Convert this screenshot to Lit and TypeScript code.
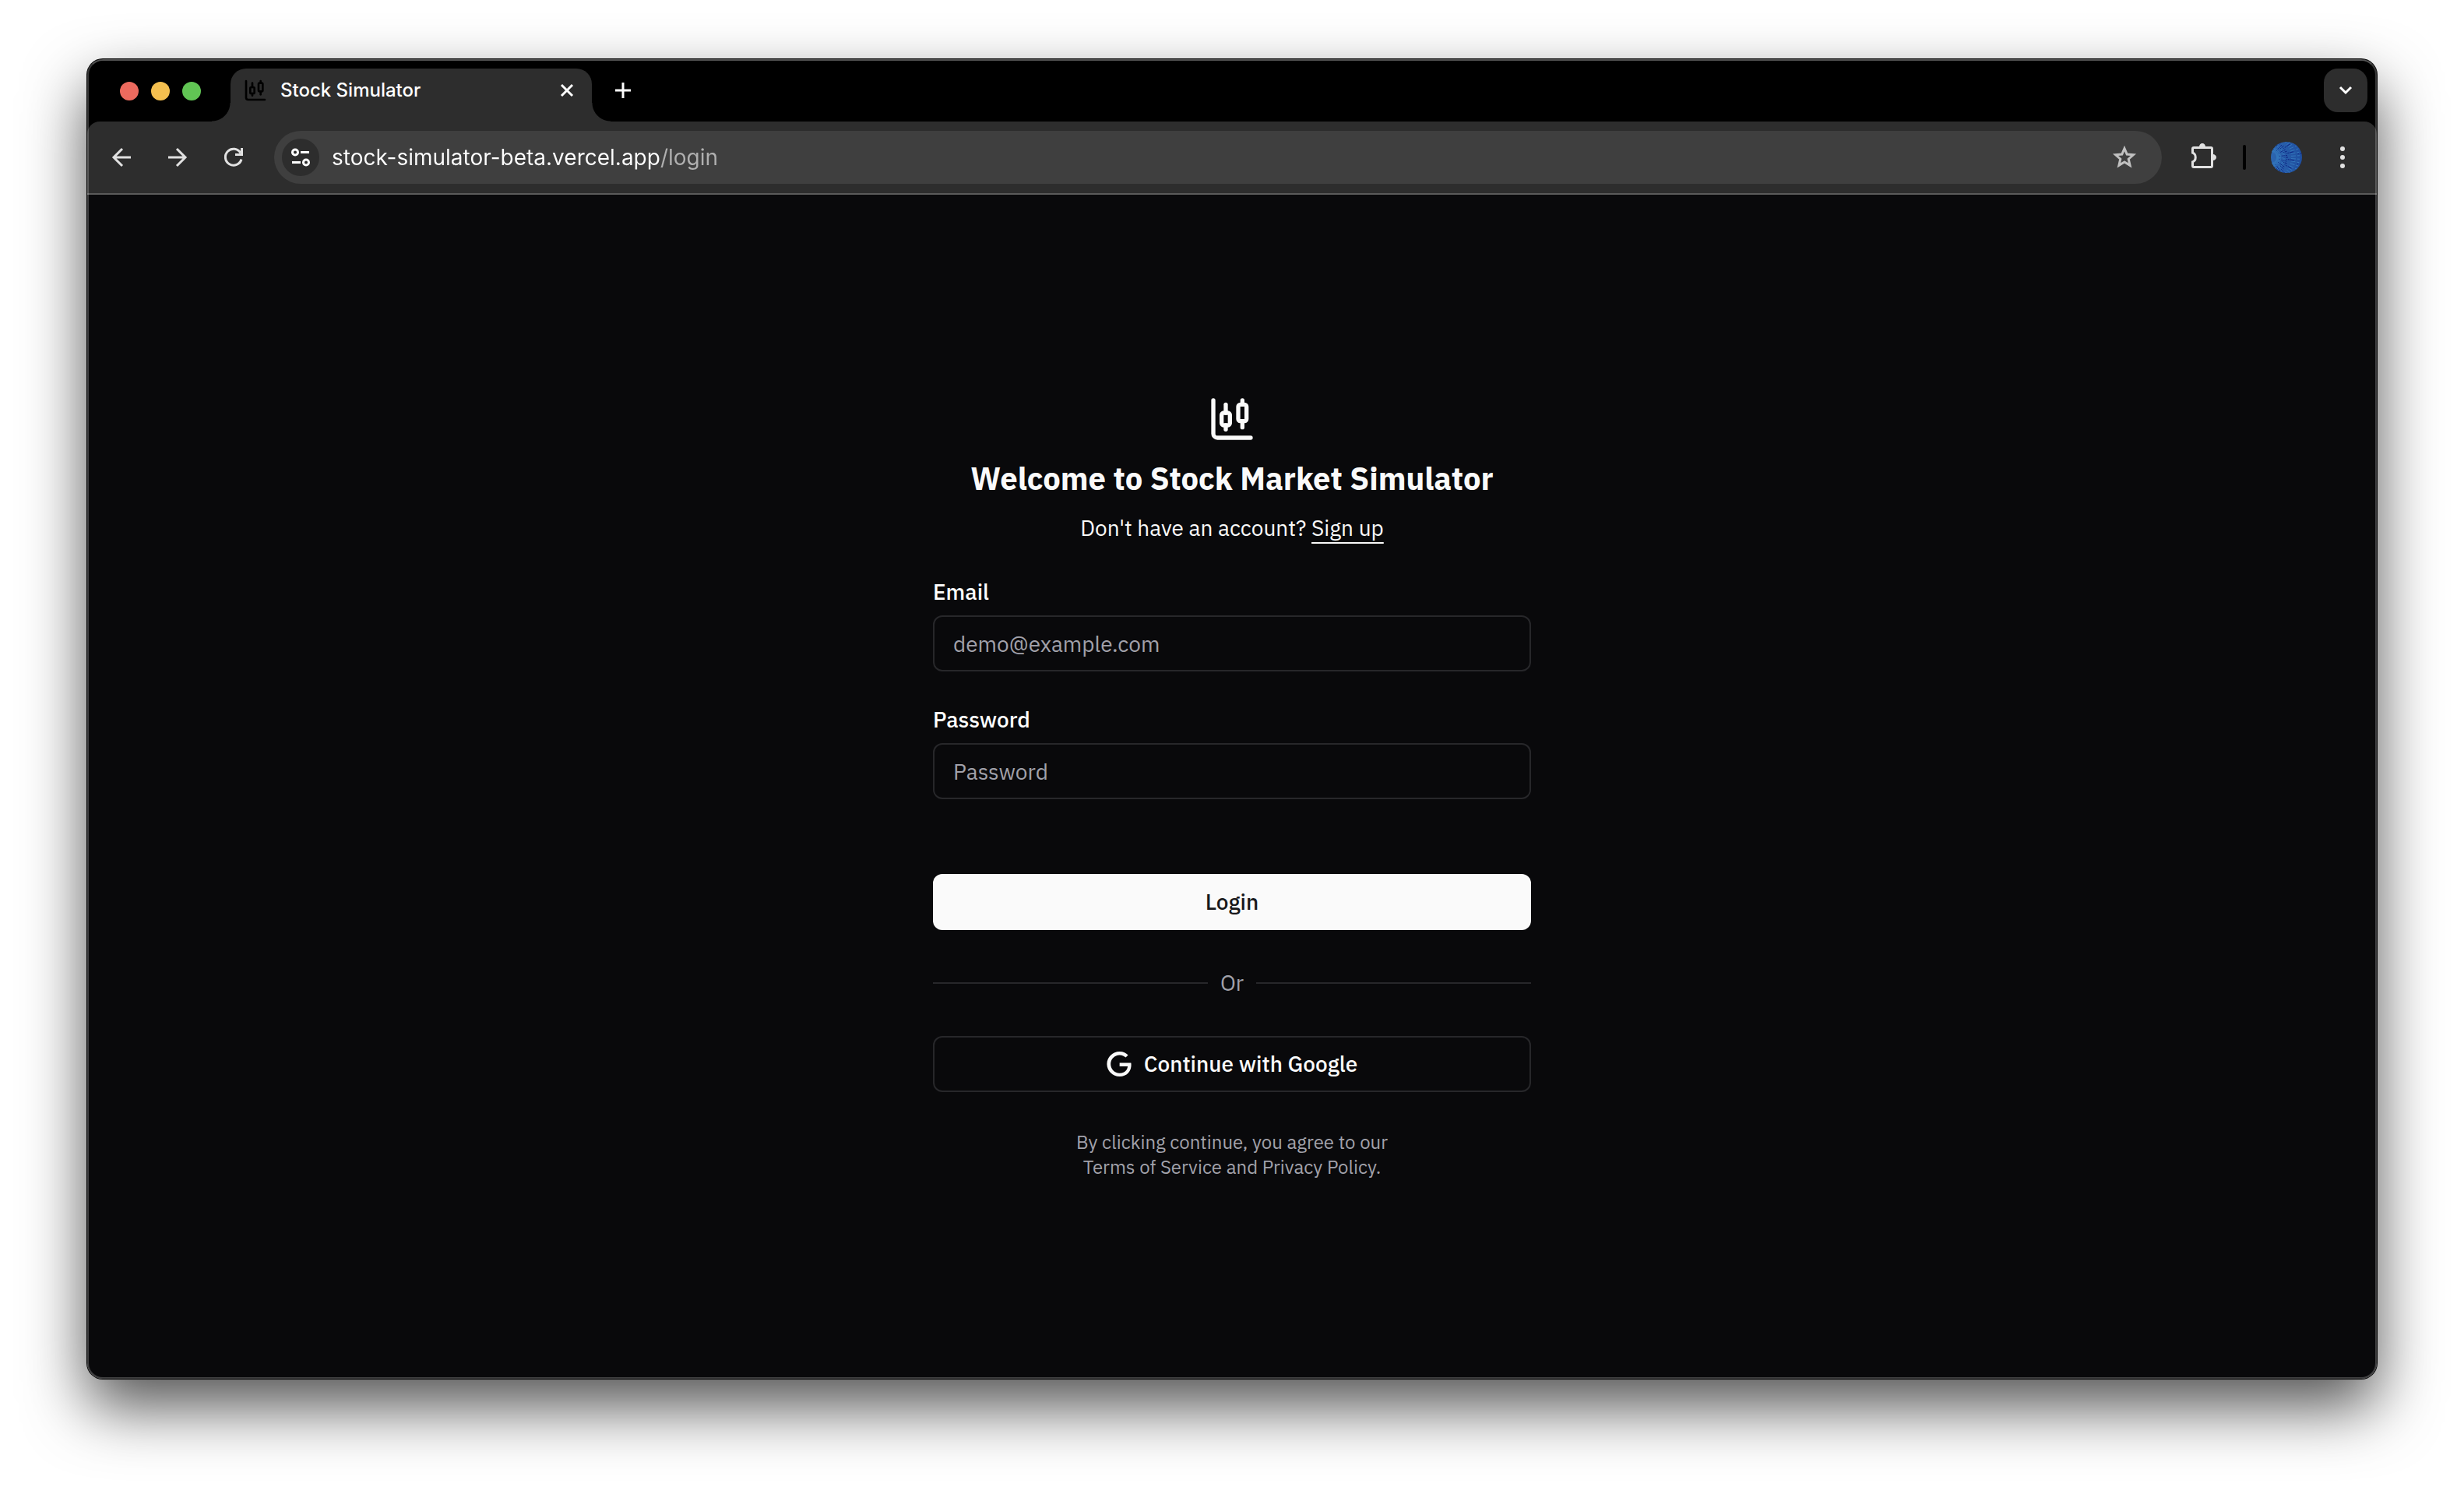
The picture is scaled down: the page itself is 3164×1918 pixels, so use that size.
import { LitElement, html, svg, css } from "lit";
import { customElement } from "lit/decorators.js";

const candlestick = html`<svg class="candlestick" viewBox="0 0 24 24" fill="none" stroke="currentColor" stroke-width="2" stroke-linecap="round" stroke-linejoin="round" aria-hidden="true">
  <path d="M9 5v4"/><rect width="4" height="6" x="7" y="9" rx="1"/><path d="M9 15v2"/>
  <path d="M17 3v2"/><rect width="4" height="8" x="15" y="5" rx="1"/><path d="M17 13v3"/>
  <path d="M3 3v16a2 2 0 0 0 2 2h16"/>
</svg>`;

@customElement("browser-chrome")
export class BrowserChrome extends LitElement {
  static styles = css`
    :host { display: block; background: #000; color: #fff; font-family: Inter, "Liberation Sans", sans-serif; }
    button { display: flex; align-items: center; justify-content: center; width: 48px; height: 48px; padding: 0; border: 0; border-radius: 50%; background: none; color: #e1e1e1; font: inherit; }
    svg { display: block; flex: none; overflow: visible; }
    .strip { display: flex; align-items: flex-start; padding: 12px 12px 0 42px; }
    .lights { display: flex; align-items: center; gap: 16px; height: 58px; margin-right: 38px; }
    .light { width: 24px; height: 24px; }
    .close { background: #ec6a5e; }
    .minimise { background: #f4bf4f; }
    .zoom { background: #61c554; }
    .tab { position: relative; display: flex; align-items: center; gap: 16px; box-sizing: border-box; width: 464px; height: 68px; padding: 0 16px 12px; border-radius: 20px 20px 0 0; background: #2d2d2d; }
    .tab::before, .tab::after { content: ""; position: absolute; bottom: 0; width: 24px; height: 24px; }
    .tab::before { right: 100%; background: radial-gradient(circle at 0 0, transparent 23px, #2d2d2d 24px); }
    .tab::after { left: 100%; background: radial-gradient(circle at 100% 0, transparent 23px, #2d2d2d 24px); }
    .candlestick { width: 32px; height: 32px; color: #000; }
    .title { flex: 1; font-size: 24px; line-height: 32px; font-weight: 450; white-space: nowrap; }
    .small { width: 32px; height: 32px; color: #fff; }
    .new { margin: 12px auto 0 24px; }
    .search { width: 56px; height: 56px; border-radius: 18px; background: #2d2d2d; color: #fff; }
    .toolbar { display: flex; align-items: center; gap: 28px; padding: 12px 20px; border-bottom: 2px solid #5a5a5a; border-radius: 16px 16px 0 0; background: #2d2d2d; }
    .group { display: flex; align-items: center; gap: 24px; }
    .omnibox { flex: 1; display: flex; align-items: center; gap: 16px; height: 68px; box-sizing: border-box; padding: 0 24px 0 10px; border-radius: 34px; background: #3f3f3f; }
    .site { background: #2d2d2d; color: #fff; }
    .url { flex: 1; min-width: 0; padding: 0; border: 0; outline: 0; color: transparent; font: 28px/40px Inter, "Liberation Sans", sans-serif; background: linear-gradient(90deg, #fff 423px, #b0b0b0 423px); -webkit-background-clip: text; background-clip: text; }
    .star { color: #c0c0c0; }
    .divider { width: 4px; height: 32px; border-radius: 2px; background: #000; }
  `;

  private avatar() {
    const rays = Array.from({ length: 49 }, (_, i) => {
      const a = ((i - 24) * 3.5 * Math.PI) / 180;
      return { x: 44 * Math.cos(a), y: 20 + 44 * Math.sin(a), i };
    });
    const dashes = ["0 16 2 1 3 2", "0 11 1 2 4 1 2 3", "0 20 1 1 2 1 5 1"];
    return html`<svg width="40" height="40" viewBox="0 0 40 40" aria-hidden="true">
      <defs>
        <clipPath id="disc"><circle cx="20" cy="20" r="20"/></clipPath>
        <linearGradient id="sea"><stop offset="0" stop-color="#2c66b0"/><stop offset="1" stop-color="#1f4fa0"/></linearGradient>
      </defs>
      <g clip-path="url(#disc)">
        <rect width="40" height="40" fill="url(#sea)"/>
        ${rays.map(r => svg`<path d=${`M0 20L${r.x.toFixed(1)} ${r.y.toFixed(1)}`} stroke=${r.i % 2 ? "#3478bd" : "#0c2080"} stroke-width="1" stroke-dasharray=${r.i % 2 ? "0 7 6 2 3 1" : dashes[r.i % 3]}/>`)}
      </g>
    </svg>`;
  }

  render() {
    return html`
      <div class="strip">
        <div class="lights">
          <button class="light close" aria-label="Close window"></button>
          <button class="light minimise" aria-label="Minimise window"></button>
          <button class="light zoom" aria-label="Zoom window"></button>
        </div>
        <div class="tab">
          ${candlestick}
          <span class="title">Stock Simulator</span>
          <button class="small" aria-label="Close tab">
            <svg width="16" height="16" viewBox="0 0 16 16" stroke="currentColor" stroke-width="3" fill="none"><path d="M1 1l14 14M15 1L1 15"/></svg>
          </button>
        </div>
        <button class="small new" aria-label="New tab">
          <svg width="20" height="20" viewBox="0 0 20 20" stroke="currentColor" stroke-width="3" fill="none"><path d="M10 0v20M0 10h20"/></svg>
        </button>
        <button class="search" aria-label="Search tabs">
          <svg width="16" height="10" viewBox="0 0 16 10" stroke="currentColor" stroke-width="3" fill="none"><path d="M1 1l7 7 7-7"/></svg>
        </button>
      </div>
      <div class="toolbar">
        <div class="group">
          <button aria-label="Back">
            <svg width="24" height="24" viewBox="0 0 24 24" stroke="currentColor" stroke-width="3" fill="none"><path d="M24 12H2M13 1L2 12l11 11"/></svg>
          </button>
          <button aria-label="Forward">
            <svg width="24" height="24" viewBox="0 0 24 24" stroke="currentColor" stroke-width="3" fill="none"><path d="M0 12h22M11 1l11 11-11 11"/></svg>
          </button>
          <button aria-label="Reload">
            <svg width="24" height="24" viewBox="0 0 24 24" stroke="currentColor" stroke-width="3" fill="none"><path d="M22 14.500A10.500 10.500 0 1 1 21 6.500M22.500 0v8.500H14"/></svg>
          </button>
        </div>
        <div class="omnibox">
          <button class="site" aria-label="View site information">
            <svg width="24" height="24" viewBox="0 0 24 24" stroke="currentColor" stroke-width="3" fill="none"><circle cx="5" cy="5.500" r="3.500"/><path d="M12 5.500h11M1 18.500h11"/><circle cx="19" cy="18.500" r="3.500"/></svg>
          </button>
          <input class="url" type="text" aria-label="Address" spellcheck="false" value="stock-simulator-beta.vercel.app/login">
          <button class="star" aria-label="Bookmark this tab">
            <svg width="32" height="32" viewBox="0 0 32 32" stroke="currentColor" stroke-width="3" fill="none"><path d="M16 4.500l3.200 7.600 8.200.7-6.200 5.400 1.900 8.100L16 22l-7.100 4.300 1.900-8.100-6.200-5.400 8.200-.7z"/></svg>
          </button>
        </div>
        <button aria-label="Extensions">
          <svg width="40" height="40" viewBox="0 0 40 40" fill="none"><path d="M9 7.500h22a1.500 1.500 0 0 1 1.500 1.500v22a1.500 1.500 0 0 1-1.500 1.500H9A1.500 1.500 0 0 1 7.500 31v-5.200c5-1.800 5-9.800 0-11.600V9A1.500 1.500 0 0 1 9 7.500z" stroke="currentColor" stroke-width="3"/><path d="M16 6.500a4 4.500 0 0 1 8 0zM33.500 16a4.500 4 0 0 1 0 8z" fill="currentColor"/></svg>
        </button>
        <div class="divider"></div>
        <div class="group">
          <button aria-label="Profile">${this.avatar()}</button>
          <button aria-label="Menu">
            <svg width="8" height="28" viewBox="0 0 8 28" fill="currentColor"><circle cx="4" cy="3" r="3"/><circle cx="4" cy="14" r="3"/><circle cx="4" cy="25" r="3"/></svg>
          </button>
        </div>
      </div>`;
  }
}

@customElement("login-form")
export class LoginForm extends LitElement {
  static styles = css`
    :host { display: block; width: 768px; max-width: 100%; color: #fafafa; font: 28px/40px "IBM Plex Sans", "Liberation Sans", sans-serif; }
    form { display: flex; flex-direction: column; gap: 48px; margin: 0; }
    header { display: flex; flex-direction: column; align-items: center; gap: 16px; text-align: center; }
    .candlestick { display: block; width: 64px; height: 64px; }
    h1 { margin: 0; font-size: 40px; line-height: 56px; font-weight: 700; }
    p { margin: 0; }
    a { color: inherit; text-decoration: none; }
    .signup { text-decoration: underline 2px; text-underline-offset: 8px; text-decoration-skip-ink: none; }
    .field { display: flex; flex-direction: column; gap: 16px; }
    label { line-height: 28px; font-weight: 500; color: #fff; }
    input, button { box-sizing: border-box; width: 100%; height: 72px; border: 2px solid #27272a; border-radius: 12px; background: transparent; color: inherit; font: inherit; }
    input { padding: 0 24px; }
    input::placeholder { color: #a1a1aa; opacity: 1; }
    button { display: flex; align-items: center; justify-content: center; gap: 16px; font-weight: 500; }
    .primary { margin-top: 48px; border: 0; background: #fafafa; color: #18181b; }
    .or { display: flex; align-items: center; gap: 16px; color: #a1a1aa; }
    .or::before, .or::after { content: ""; flex: 1; height: 2px; background: #27272a; }
    .legal { color: #a1a1aa; font-size: 24px; line-height: 32px; text-align: center; }
  `;

  render() {
    return html`
      <form @submit=${(e: Event) => e.preventDefault()}>
        <header>
          ${candlestick}
          <h1>Welcome to Stock Market Simulator</h1>
          <p>Don't have an account? <a class="signup" href="#signup">Sign up</a></p>
        </header>
        <div class="field">
          <label for="email">Email</label>
          <input id="email" type="email" placeholder="demo@example.com">
        </div>
        <div class="field">
          <label for="password">Password</label>
          <input id="password" type="password" placeholder="Password">
        </div>
        <button class="primary" type="submit">Login</button>
        <div class="or">Or</div>
        <button type="button">
          <svg width="32" height="32" viewBox="0 0 24 24" fill="currentColor" aria-hidden="true"><path d="M12.480 10.920v3.280h7.840c-.24 1.840-.853 3.187-1.787 4.133-1.147 1.147-2.933 2.400-6.053 2.400-4.827 0-8.600-3.893-8.600-8.720s3.773-8.720 8.600-8.720c2.600 0 4.507 1.027 5.907 2.347l2.307-2.307C18.747 1.440 16.133 0 12.480 0 5.867 0 .307 5.387.307 12s5.560 12 12.173 12c3.573 0 6.267-1.173 8.373-3.360 2.160-2.160 2.840-5.213 2.840-7.667 0-.76-.053-1.467-.173-2.053H12.480z"/></svg>
          Continue with Google
        </button>
        <p class="legal">By clicking continue, you agree to our<br><a href="#terms">Terms of Service</a> and <a href="#privacy">Privacy Policy.</a></p>
      </form>`;
  }
}

@customElement("app-root")
export class AppRoot extends LitElement {
  static styles = css`
    :host { display: flex; box-sizing: border-box; min-height: 100vh; padding: 76px 112px 148px; background: #fff; }
    .window { position: relative; flex: 1; display: flex; flex-direction: column; min-width: 0; overflow: hidden; border-radius: 20px; background: #09090b; }
    .frame { flex: 1; display: flex; min-width: 0; border-radius: 20px; box-shadow: 0 0 0 1px #000, 0 36px 80px rgba(0, 0, 0, 0.68); }
    .window::after { content: ""; position: absolute; inset: 0; border: 2px solid rgba(255, 255, 255, 0.22); border-top-color: rgba(255, 255, 255, 0.32); border-radius: 20px; pointer-events: none; }
    main { flex: 1; display: flex; align-items: center; justify-content: center; padding: 48px; }
  `;

  render() {
    return html`
      <div class="frame">
        <div class="window">
          <browser-chrome></browser-chrome>
          <main><login-form></login-form></main>
        </div>
      </div>`;
  }
}
